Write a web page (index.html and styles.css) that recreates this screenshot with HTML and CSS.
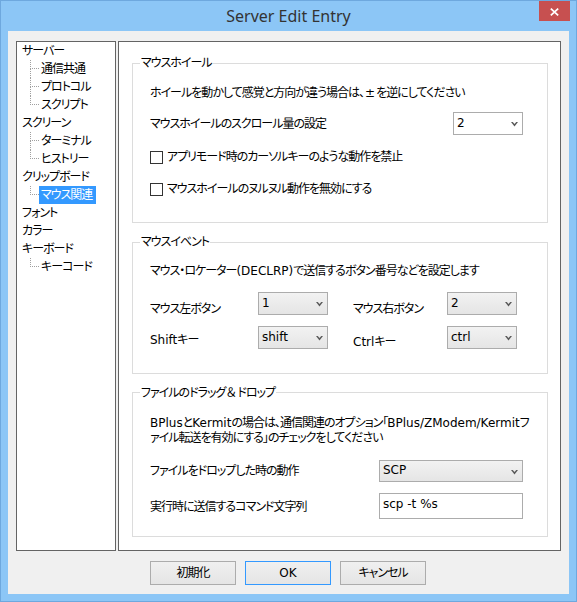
FILE: index.html
```html
<!DOCTYPE html>
<html lang="ja">
<head>
<meta charset="utf-8">
<title>Server Edit Entry</title>
<link rel="stylesheet" href="styles.css">
</head>
<body>
<div class="window">
  <div class="titlebar">
    <div class="title">Server Edit Entry</div>
    <div class="close"><svg width="9" height="8" viewBox="0 0 9 8"><path d="M0.8 0.6 L8.2 7.4 M8.2 0.6 L0.8 7.4" stroke="#fff" stroke-width="1.7" fill="none"/></svg></div>
  </div>
  <div class="client">
    <div class="panes">
      <div class="tree">
        <div class="node root"><span class="lbl">サーバー</span></div>
        <div class="node child"><span class="conn"><span class="up"></span><span class="down"></span></span><span class="lbl">通信共通</span></div>
        <div class="node child"><span class="conn"><span class="up"></span><span class="down"></span></span><span class="lbl">プロトコル</span></div>
        <div class="node child last"><span class="conn"><span class="up"></span><span class="down"></span></span><span class="lbl">スクリプト</span></div>
        <div class="node root"><span class="lbl">スクリーン</span></div>
        <div class="node child"><span class="conn"><span class="up"></span><span class="down"></span></span><span class="lbl">ターミナル</span></div>
        <div class="node child last"><span class="conn"><span class="up"></span><span class="down"></span></span><span class="lbl">ヒストリー</span></div>
        <div class="node root"><span class="lbl">クリップボード</span></div>
        <div class="node child last"><span class="conn"><span class="up"></span><span class="down"></span></span><span class="lbl sel">マウス関連</span></div>
        <div class="node root"><span class="lbl">フォント</span></div>
        <div class="node root"><span class="lbl">カラー</span></div>
        <div class="node root"><span class="lbl">キーボード</span></div>
        <div class="node child last"><span class="conn"><span class="up"></span><span class="down"></span></span><span class="lbl">キーコード</span></div>
      </div>
      <div class="page">
        <fieldset class="group g1">
          <legend>マウスホイール</legend>
          <div class="row text r1">ホイールを動かして感覚と方向が違う場合は、<span class="pm">±</span>を逆にしてください</div>
          <div class="row form-wheel">
            <span class="label">マウスホイールのスクロール量の設定</span>
            <div class="select white w70"><span class="val">2</span><svg class="chev" width="7" height="5" viewBox="0 0 7 5"><path d="M0 0 H1.8 L3.5 2 L5.2 0 H7 L3.5 4.6 Z" fill="#5a5a5a"/></svg></div>
          </div>
          <div class="row check c1"><span class="box"></span><span>アプリモード時のカーソルキーのような動作を禁止</span></div>
          <div class="row check c2"><span class="box"></span><span>マウスホイールのヌルヌル動作を無効にする</span></div>
        </fieldset>
        <fieldset class="group g2">
          <legend>マウスイベント</legend>
          <div class="row text r1">マウス・ロケーター<span class="lat">(DECLRP)</span>で送信するボタン番号などを設定します</div>
          <div class="grid4 gr1">
            <span class="label lt1">マウス左ボタン</span>
            <div class="select gray w70"><span class="val">1</span><svg class="chev" width="7" height="5" viewBox="0 0 7 5"><path d="M0 0 H1.8 L3.5 2 L5.2 0 H7 L3.5 4.6 Z" fill="#5a5a5a"/></svg></div>
            <span class="label lt1">マウス右ボタン</span>
            <div class="select gray w70"><span class="val">2</span><svg class="chev" width="7" height="5" viewBox="0 0 7 5"><path d="M0 0 H1.8 L3.5 2 L5.2 0 H7 L3.5 4.6 Z" fill="#5a5a5a"/></svg></div>
          </div>
          <div class="grid4 gr2">
            <span class="label lt2"><span class="lat">Shift</span>キー</span>
            <div class="select gray w70"><span class="val">shift</span><svg class="chev" width="7" height="5" viewBox="0 0 7 5"><path d="M0 0 H1.8 L3.5 2 L5.2 0 H7 L3.5 4.6 Z" fill="#5a5a5a"/></svg></div>
            <span class="label lt3"><span class="lat">Ctrl</span>キー</span>
            <div class="select gray w70"><span class="val">ctrl</span><svg class="chev" width="7" height="5" viewBox="0 0 7 5"><path d="M0 0 H1.8 L3.5 2 L5.2 0 H7 L3.5 4.6 Z" fill="#5a5a5a"/></svg></div>
          </div>
        </fieldset>
        <fieldset class="group g3">
          <legend>ファイルのドラッグ<span class="amp">＆</span>ドロップ</legend>
          <div class="row para"><span class="lat">BPlus</span>と<span class="lat">Kermit</span>の場合は、通信関連のオプション「<span class="lat">BPlus/ZModem/Kermit</span>フ<br>ァイル転送を有効にする」のチェックをしてください</div>
          <div class="row form-drop">
            <span class="label">ファイルをドロップした時の動作</span>
            <div class="select gray w144"><span class="val">SCP</span><svg class="chev" width="7" height="5" viewBox="0 0 7 5"><path d="M0 0 H1.8 L3.5 2 L5.2 0 H7 L3.5 4.6 Z" fill="#5a5a5a"/></svg></div>
          </div>
          <div class="row form-cmd">
            <span class="label">実行時に送信するコマンド文字列</span>
            <div class="input">scp -t %s</div>
          </div>
        </fieldset>
      </div>
    </div>
    <div class="buttons">
      <div class="btn">初期化</div>
      <div class="btn default"><span class="lat">OK</span></div>
      <div class="btn">キャンセル</div>
    </div>
  </div>
</div>
</body>
</html>
```
FILE: styles.css
```css
* { box-sizing: border-box; }
html, body { margin: 0; padding: 0; }
body {
  width: 577px;
  height: 602px;
  overflow: hidden;
  font-family: "DejaVu Sans", "Noto Sans CJK JP", sans-serif;
  font-size: 12px;
  letter-spacing: -1px;
  font-feature-settings: "palt";
  color: #000;
}
.lat, .select .val, .input {
  font-size: 12px;
  letter-spacing: 0;
}
.pm { letter-spacing: 0; padding: 0 1px; }
.amp {
  font-family: "Noto Sans CJK JP", sans-serif;
  font-feature-settings: normal;
  letter-spacing: 0;
}
.window {
  width: 577px;
  height: 602px;
  background: #8cc6f6;
  border: 1px solid #6ea8de;
  padding: 0 7px 7px 7px;
  display: flex;
  flex-direction: column;
}
.titlebar {
  height: 30px;
  display: grid;
  grid-template-columns: 1fr auto 1fr;
}
.title {
  grid-column: 2;
  font-family: "Noto Sans", "Open Sans", sans-serif;
  font-size: 16px;
  letter-spacing: 0;
  line-height: 30px;
  color: #333;
  white-space: nowrap;
}
.close {
  grid-column: 3;
  justify-self: end;
  width: 31px;
  height: 20px;
  margin-right: -1px;
  background: #c75050;
  display: flex;
  align-items: center;
  justify-content: center;
  padding-top: 1px;
}
.client {
  height: 563px;
  background: #f0f0f0;
  padding: 10px 8px 0 8px;
  display: flex;
  flex-direction: column;
}
.panes {
  display: flex;
  gap: 2px;
  height: 510px;
}
.tree {
  width: 100px;
  height: 510px;
  background: #fff;
  border: 1px solid #646464;
  display: flex;
  flex-direction: column;
}
.node {
  height: 18px;
  display: flex;
  align-items: stretch;
  white-space: nowrap;
}
.node.root { padding-left: 3px; }
.node.child { padding-left: 13px; }
.lbl {
  padding: 0 2px 0 2px;
  line-height: 18px;
}
.lbl.sel {
  background: #3399ff;
  color: #fff;
  padding-right: 4px;
}
.conn {
  width: 9px;
  display: flex;
  flex-direction: column;
}
.conn .up {
  height: 9px;
  border-left: 1px dotted #a0a0a0;
  border-bottom: 1px dotted #a0a0a0;
}
.conn .down {
  height: 9px;
  border-left: 1px dotted #a0a0a0;
}
.node.last .conn .down { border-left: none; }

.page {
  width: 443px;
  height: 510px;
  background: #fff;
  border: 1px solid #646464;
  padding: 13px 12px 0 13px;
  display: flex;
  flex-direction: column;
}
.group {
  margin: 0;
  border: 1px solid #dcdcdc;
  padding: 0 0 0 17px;
  min-width: 0;
  display: flex;
  flex-direction: column;
}
.group legend {
  margin-left: -10px;
  padding: 0 1px;
  line-height: 16px;
  white-space: nowrap;
}
.g1 { padding-bottom: 23px; }
.g2 { margin-top: 11px; padding-bottom: 21px; }
.g3 { margin-top: 10px; padding-bottom: 17px; }
.row { white-space: nowrap; }
.text { line-height: 20px; }
.g1 .r1 { margin-top: 12px; }
.g2 .r1 { margin-top: 11px; }

.form-wheel {
  margin-top: 9px;
  display: grid;
  grid-template-columns: 303px 70px;
  align-items: center;
}
.check {
  display: flex;
  align-items: center;
  height: 20px;
  line-height: 20px;
}
.c1 { margin-top: 12px; }
.c2 { margin-top: 12px; }
.box {
  width: 13px;
  height: 13px;
  border: 1px solid #333;
  background: #fff;
  margin-right: 4px;
  flex: none;
}

.grid4 {
  display: grid;
  grid-template-columns: 108px 95px 94px 70px;
  align-items: start;
}
.gr1 { margin-top: 11px; }
.gr2 { margin-top: 7px; }
.label { line-height: 20px; white-space: nowrap; }
.lt1 { padding-top: 7px; }
.lt2 { padding-top: 4px; }
.lt3 { padding-top: 6px; }

.select {
  height: 23px;
  border: 1px solid #acacac;
  display: flex;
  align-items: center;
  justify-content: space-between;
  padding: 0 4px 0 3px;
}
.select .val { line-height: 20px; margin-top: -2px; }
.select .chev { margin-top: 2px; }
.select.white { background: #fff; }
.select.gray { background: linear-gradient(#f2f2f2, #e5e5e5); }
.w70 { width: 70px; }
.w144 { width: 144px; height: 22px; }

.para {
  margin-top: 15px;
  line-height: 15px;
}
.form-drop {
  margin-top: 14px;
  display: grid;
  grid-template-columns: 229px 144px;
  align-items: center;
}
.form-cmd {
  margin-top: 11px;
  display: grid;
  grid-template-columns: 229px 144px;
  align-items: center;
}
.form-cmd .label { padding-top: 2px; }
.input {
  height: 26px;
  border: 1px solid #acacac;
  background: #fff;
  padding: 0 3px;
  line-height: 20px;
}

.buttons {
  margin-top: 10px;
  display: flex;
  justify-content: center;
  gap: 9px;
  padding-right: 1px;
}
.btn {
  width: 86px;
  height: 24px;
  border: 1px solid #acacac;
  background: linear-gradient(#f0f0f0, #e5e5e5);
  text-align: center;
  line-height: 22px;
}
.btn.default { border-color: #3399ff; }
```
